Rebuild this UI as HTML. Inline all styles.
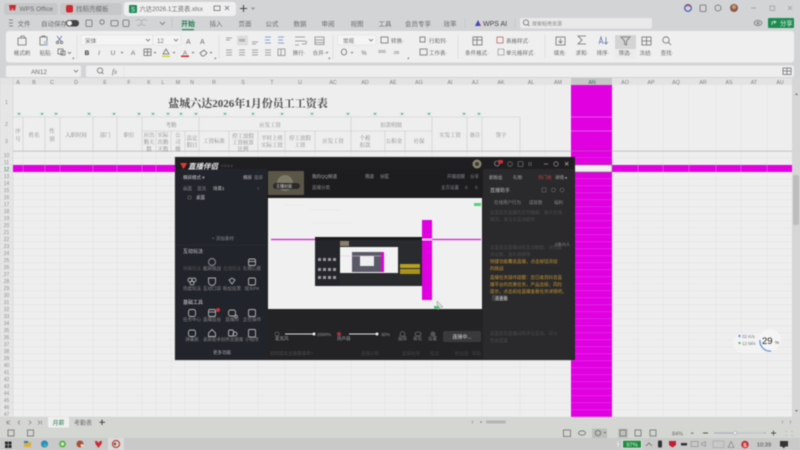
<!DOCTYPE html>
<html lang="zh"><head><meta charset="utf-8"><title>WPS</title>
<style>
html,body{margin:0;padding:0;background:#d3d4d6;width:800px;height:450px;overflow:hidden}
svg{display:block;filter:blur(.55px);font-size:6.5px;fill:#6c6c6c}
text{font-family:"Liberation Sans","Noto Sans CJK SC",sans-serif}
.m{text-anchor:middle}
.se text,text.se{font-family:"Liberation Serif","Noto Serif CJK SC",serif}
.ic{fill:none;stroke:#6e6e6e;stroke-width:.8}
.dk{fill:none;stroke:#b4b4b4;stroke-width:.9}
.dt{fill:#88888c;font-size:4.5px}
</style></head><body>
<svg width="800" height="450" viewBox="0 0 800 450" xmlns="http://www.w3.org/2000/svg">
<defs>
<pattern id="rows" x="0" y="151" width="10" height="7" patternUnits="userSpaceOnUse"><rect width="10" height="7" fill="#eeeeee"/><rect y="6.5" width="10" height=".5" fill="#e0e1e0"/></pattern>
<pattern id="mrows" x="0" y="151" width="10" height="7" patternUnits="userSpaceOnUse"><rect width="10" height="7" fill="#e000e0"/><rect y="6.4" width="10" height=".6" fill="#e838e8"/></pattern>
<pattern id="lab" x="0" y="151" width="13" height="7" patternUnits="userSpaceOnUse"><rect width="13" height="7" fill="#e6e6e6"/><rect y="6.6" width="13" height=".4" fill="#d8d8d8"/></pattern>
<g id="fm"><rect x="-2.5" y="-2" width="5" height="4" fill="#dcebe4"/><path d="M-1.3-.8h2.6L0 .9z" fill="#2c8a66"/></g>
</defs>
<rect width="800" height="450" fill="#d3d4d6"/>

<!-- top tabs -->
<rect x="4" y="3" width="54" height="12" rx="3" fill="#c6c7c9"/>
<rect x="60" y="3" width="62" height="12" rx="3" fill="#c6c7c9"/>
<rect x="124" y="2" width="112" height="14" rx="3" fill="#efefef"/>
<path d="M9 5h7l-1 5.500h-1.500L12.500 7.500 11.500 10.500H10z" fill="#c8282c"/>
<text x="19.500" y="11">WPS Office</text>
<rect x="66" y="5" width="7" height="7.500" rx="2" fill="#cf2a30"/>
<text x="76" y="11">找稻壳模板</text>
<rect x="129" y="5" width="8" height="8" rx="1" fill="#1f8a57"/><text x="131" y="11.500" style="fill:#fff;font-size:6px">S</text>
<text x="139.500" y="11" style="font-size:6.300px">六达2026.1工资表.xlsx</text>
<rect x="214" y="6" width="6" height="4.500" class="ic"/><path d="M225 6l4 4m0-4l-4 4" class="ic"/>
<path d="M243.500 5v7M240 8.500h7" stroke="#444" stroke-width="1" fill="none"/><path d="M251.500 7.500l1.500 1.500 1.500-1.500" class="ic"/>
<!-- window controls -->
<circle cx="688" cy="8" r="3.300" fill="none" stroke="#4060c0" stroke-width="1.300"/><path d="M685.500 6.500a3.300 3.300 0 0 1 5 0" stroke="#d04040" stroke-width="1.300" fill="none"/>
<rect x="700" y="5" width="6" height="6.500" rx="1" class="ic"/><circle cx="718" cy="8" r="3" class="ic"/><circle cx="734" cy="8" r="4" fill="#8a5a45"/><circle cx="734" cy="7" r="2" fill="#c99a80"/>
<path d="M751 8h5" stroke="#999" stroke-width=".8"/><rect x="770" y="6" width="4.500" height="4.500" fill="none" stroke="#999" stroke-width=".7"/><path d="M788 6l4 4m0-4l-4 4" stroke="#999" stroke-width=".7"/>

<!-- menu row -->
<path d="M9 20h4M9 23h4M9 26h4" class="ic"/>
<text x="17.500" y="26">文件</text><text x="41" y="26">自动保存</text>
<rect x="66" y="20" width="13" height="6.500" rx="3.200" fill="#444"/><circle cx="69.500" cy="23.200" r="2.500" fill="#eee"/>
<rect x="86" y="20" width="6" height="6.500" rx="1" class="ic"/><circle cx="102" cy="22" r="2.200" class="ic"/><rect x="111" y="20.500" width="7" height="5.500" rx="1" class="ic"/><rect x="123" y="20" width="6" height="6.500" rx="1.500" class="ic"/>
<path d="M136 21a3 3 0 1 1 1 4M147 21a3 3 0 1 0-1 4" stroke="#aaa" stroke-width=".7" fill="none"/><path d="M160 22l2.500 2.500L165 22" class="ic"/>
<path d="M172 18v10" stroke="#bbb" stroke-width=".6"/>
<text class="m" x="188" y="26" style="fill:#1c7a4a;font-size:7px;font-weight:bold">开始</text>
<rect x="182" y="29" width="12" height="1.300" fill="#2b8a5a"/>
<text class="m" x="216" y="26">插入</text><text class="m" x="245" y="26">页面</text><text class="m" x="272" y="26">公式</text><text class="m" x="300" y="26">数据</text><text class="m" x="328" y="26">审阅</text><text class="m" x="357" y="26">视图</text><text class="m" x="385" y="26">工具</text><text class="m" x="418" y="26">会员专享</text><text class="m" x="450" y="26">效率</text>
<path d="M465 18v10" stroke="#c3c3c3" stroke-width=".6"/>
<path d="M475 26l3-6 3 6z" fill="#2c50c8"/><path d="M478 20l3 6h-1.500z" fill="#d0304a"/>
<text x="483" y="26" style="font-size:7px;fill:#444">WPS AI</text>
<path d="M515 18v10" stroke="#c3c3c3" stroke-width=".6"/>
<rect x="520" y="18" width="132" height="10.500" rx="2" fill="#e9e9e9"/><circle cx="526" cy="22.500" r="2.600" class="ic"/><path d="M528 24.500l1.500 1.500" class="ic"/>
<text x="532" y="25.500" style="font-size:5px;fill:#888">搜索稻壳资源</text>
<ellipse cx="758" cy="23" rx="3.800" ry="2.600" class="ic"/><circle cx="758" cy="23" r="1" class="ic"/>
<rect x="768" y="18" width="26" height="10" rx="1" fill="#1c8c50"/><text x="780" y="25.500" style="fill:#e8f6ee;font-size:6.300px">分享</text><path d="M772 25v-3h3m-1-1.500l2 1.500-2 1.500" stroke="#e8f6ee" stroke-width=".7" fill="none"/>

<!-- ribbon -->
<rect x="6" y="31" width="788" height="31.500" rx="3" fill="#efefef"/>
<g fill="none" stroke="#d8d8d8" stroke-width=".6"><path d="M77 35v24M219 35v24M333 35v24M458 35v24M545 35v24"/></g>
<!-- clipboard -->
<path d="M18 38h8v7h-8zM21 38v-2h3l1 2" class="ic"/><path d="M40 37h7v8h-7zM42 37v-1h3v1" class="ic"/><rect x="44" y="41" width="4" height="4" fill="#b8c8d8"/>
<path d="M57 36l4 5m1-5l-4 5" stroke="#6b78a8" stroke-width=".8" fill="none"/><circle cx="57.500" cy="42.500" r="1.200" class="ic"/><circle cx="61.500" cy="42.500" r="1.200" class="ic"/>
<rect x="58" y="49" width="5" height="5" class="ic"/><rect x="61" y="51" width="4" height="4" class="ic"/>
<g style="font-size:5.500px"><text class="m" x="22" y="55">格式刷</text><text class="m" x="46" y="55">粘贴·</text></g>
<path d="M68 52l1.500 1.500L71 52" class="ic"/>
<!-- font -->
<rect x="81" y="35" width="72" height="10" rx="1.500" fill="#f4f4f4" stroke="#dcdcdc" stroke-width=".5"/>
<rect x="153" y="35" width="28" height="10" rx="1.500" fill="#f4f4f4" stroke="#dcdcdc" stroke-width=".5"/>
<text x="85" y="43" style="font-size:5.800px">宋体</text><path d="M146 39l2 2 2-2M174 39l2 2 2-2" class="ic"/><text x="157" y="43" style="font-size:6px">12</text>
<text x="186" y="44" style="font-size:7px">A</text><text x="200" y="44" style="font-size:7px">A</text>
<text class="m" x="87" y="55" style="font-weight:bold;fill:#333">B</text><text class="m" x="99" y="55" style="font-style:italic">I</text><text class="m" x="113" y="55">U</text><path d="M121 52l1 1 1-1" class="ic"/><text class="m" x="133" y="55">A</text>
<rect x="144" y="49" width="7" height="6.500" class="ic"/><path d="M144 52h7M147.500 49v6.500" class="ic"/><path d="M154 52l1 1 1-1" class="ic"/>
<path d="M163 54l3-5 3 5z" class="ic"/><rect x="162" y="55.500" width="8" height="1.500" fill="#c8d83c"/><path d="M173 52l1 1 1-1" class="ic"/>
<text class="m" x="185" y="55">A</text><rect x="181" y="55.500" width="8" height="1.500" fill="#c8242c"/><path d="M192 52l1 1 1-1" class="ic"/>
<path d="M200 53l4-3 3 3-3 3h-2z" class="ic"/><path d="M210 52l1 1 1-1" class="ic"/>
<path d="M72 59l2-2v2zM214 59l2-2v2zM328 59l2-2v2zM407 59l2-2v2z" fill="#777"/>
<!-- align -->
<rect x="237" y="35.500" width="11" height="10" rx="1" fill="#dcdcdc"/>
<g stroke="#8c8c8c" stroke-width=".8" fill="none">
<path d="M226 38h6M226 40h4M239 39.500h6M239 41h6M252 42h6M252 44h4"/>
<path d="M265 37h6M265 40h5M265 43h6M278 37h6M278 40h5M278 43h6" stroke="#6a8ac8"/>
<path d="M226 50h6M226 52.500h6M226 55h6M239 50h6M239 52.500h6M239 55h6M252 50h6M252 52.500h6M252 55h6M265 50h6M265 52.500h6M265 55h6"/>
<rect x="278" y="49" width="7" height="6.500"/><path d="M281 49v6.500"/>
<path d="M295 37h10M295 41h10a1.500 1.500 0 0 1 0 3h-3M295 45h4"/>
<rect x="315" y="37" width="9" height="7.500"/><path d="M315 40h9M315 42.500h9"/>
</g>
<g style="font-size:5.500px"><text class="m" x="299" y="55">换行·</text><text class="m" x="319" y="55">合并·</text></g>
<path d="M326 52l1 1 1-1" class="ic"/>
<!-- number -->
<rect x="338" y="35" width="38" height="10" rx="1.500" fill="#f4f4f4" stroke="#dcdcdc" stroke-width=".5"/>
<text x="343" y="42.800" style="font-size:5.500px">常规</text><path d="M369 39l2 2 2-2" class="ic"/>
<ellipse cx="344" cy="52" rx="2.600" ry="3" class="ic"/><path d="M351 52l1 1 1-1" class="ic"/>
<text class="m" x="364" y="55" style="font-size:6px">%</text><text class="m" x="382" y="53" style="font-size:4.500px">000</text><text class="m" x="396" y="54" style="font-size:4.500px">.00</text>
<rect x="381" y="37" width="7" height="6" class="ic"/><text x="391" y="43" style="font-size:5.500px">转换·</text>
<rect x="420" y="37" width="5" height="5" class="ic"/><text x="429" y="43" style="font-size:5.500px">行和列·</text>
<rect x="420" y="49" width="7" height="6" class="ic"/><text x="429" y="55" style="font-size:5.500px">工作表·</text>
<!-- styles -->
<rect x="473" y="37" width="9" height="8" class="ic"/><path d="M473 40h9M477 37v8" class="ic"/>
<rect x="497" y="37" width="6" height="6" class="ic" style="stroke:#b86a6a"/><text x="506" y="43" style="font-size:5.500px">表格样式·</text>
<rect x="498" y="49" width="6" height="6" class="ic" stroke-dasharray="1 .6"/><text x="506" y="55" style="font-size:5.500px">单元格样式·</text>
<text class="m" x="477" y="55" style="font-size:5.500px">条件格式·</text>
<!-- right tools -->
<rect x="615" y="35" width="21" height="14" rx="1" fill="#d4d4d4"/><rect x="615" y="49" width="21" height="10" rx="1" fill="#ebebeb"/>
<rect x="556" y="37" width="9" height="8" class="ic"/><path d="M560.500 38.500v4M558.500 41l2 2 2-2" class="ic"/>
<path d="M586 36h-8l4 4-4 4h8" class="ic"/>
<path d="M599 44l2-7 2 7M600 42h2M606 37v7M604 42l2 2 2-2" class="ic" style="stroke:#6a7ab0"/>
<path d="M621 37h9l-3.500 4v4l-2-1v-3z" class="ic"/>
<rect x="642" y="37" width="9" height="8" class="ic"/><path d="M642 41h9M646.500 37v8" class="ic"/>
<circle cx="666" cy="40" r="3.200" class="ic"/><path d="M668.500 42.500l2.500 2.500" class="ic"/>
<g style="font-size:5.500px"><text class="m" x="560" y="55">填充·</text><text class="m" x="582" y="55">求和·</text><text class="m" x="603" y="55">排序·</text><text class="m" x="625" y="55">筛选·</text><text class="m" x="646" y="55">冻结·</text><text class="m" x="667" y="55">查找·</text></g>

<!-- formula bar -->
<rect x="6" y="65.500" width="75" height="11.500" rx="2" fill="#eeeeee"/>
<rect x="86" y="65.500" width="708" height="11.500" rx="2" fill="#eeeeee"/>
<text class="m" x="39" y="74" style="font-size:6.300px">AN12</text><path d="M74 70l2 2 2-2" class="ic"/>
<circle cx="100" cy="70.500" r="2.600" class="ic"/><path d="M102 72.500l1.500 1.500" class="ic"/>
<text x="112" y="74" class="se" style="font-style:italic;font-size:7px">fx</text><path d="M124 66v11" stroke="#ddd" stroke-width=".5"/>
<rect x="783" y="68" width="8" height="6.500" class="ic"/><path d="M783 71h8M787 68v6.500" class="ic"/>

<!-- sheet -->
<rect x="0" y="78" width="800" height="7.500" fill="#e3e3e3"/>
<rect x="571" y="78" width="41" height="7.500" fill="#c6c8c6"/>
<rect x="13" y="85" width="779" height="66" fill="#eeeeee"/>
<rect x="13" y="151" width="779" height="266" fill="url(#rows)"/>
<rect x="0" y="85" width="13" height="66" fill="#e6e6e6"/>
<rect x="0" y="151" width="13" height="266" fill="url(#lab)"/>
<path d="M13 78v339" stroke="#cfcfcf" stroke-width=".5"/>
<g stroke="#e0e0e0" stroke-width=".5" fill="none"><path d="M23 151v266M45 151v266M60 151v266M93 151v266M117 151v266M142 151v266M156 151v266M171 151v266M185 151v266M199 151v266M229 151v266M258 151v266M285 151v266M315 151v266M351 151v266M385 151v266M405 151v266M432 151v266M467 151v266M482 151v266M520 151v266M545 85v332M638 85v332M663 85v332M689 85v332M716 85v332M741 85v332M767 85v332"/></g>
<g style="font-size:5.300px;fill:#808080">
<text class="m" x="18" y="84">A</text><text class="m" x="34" y="84">B</text><text class="m" x="52" y="84">C</text><text class="m" x="76" y="84">D</text><text class="m" x="105" y="84">E</text><text class="m" x="129" y="84">F</text><text class="m" x="149" y="84">K</text><text class="m" x="163" y="84">L</text><text class="m" x="178" y="84">M</text><text class="m" x="192" y="84">N</text><text class="m" x="214" y="84">R</text><text class="m" x="243" y="84">S</text><text class="m" x="272" y="84">T</text><text class="m" x="300" y="84">U</text><text class="m" x="333" y="84">AC</text><text class="m" x="365" y="84">AD</text><text class="m" x="393" y="84">AE</text><text class="m" x="419" y="84">AG</text><text class="m" x="450" y="84">AI</text><text class="m" x="475" y="84">AJ</text><text class="m" x="501" y="84">AK</text><text class="m" x="531" y="84">AL</text><text class="m" x="558" y="84">AM</text><text class="m" x="592" y="84" style="fill:#2a7a50">AN</text><text class="m" x="625" y="84">AO</text><text class="m" x="651" y="84">AP</text><text class="m" x="676" y="84">AQ</text><text class="m" x="703" y="84">AR</text><text class="m" x="729" y="84">AS</text><text class="m" x="754" y="84">AT</text><text class="m" x="780" y="84">AU</text>
</g>
<!-- header table lines -->
<g stroke="#c8c8c8" stroke-width=".6" fill="none">
<path d="M13 117H520M142 131H199M199 131H351M351 131H432"/>
<path d="M23 117v34M45 117v34M60 117v34M93 117v34M117 117v34M142 117v34M199 117v34M351 117v34M432 117v34M467 117v34M482 117v34M520 117v34"/>
<path d="M156 131v20M171 131v20M185 131v20M229 131v20M258 131v20M285 131v20M315 131v20M385 131v20M405 131v20"/>
</g>
<path d="M13 151.200H792" stroke="#bcbcbc" stroke-width=".9"/>
<text class="m se" x="248" y="107" style="font-size:11px;fill:#4a4a4a;font-weight:bold">盐城六达2026年1月份员工工资表</text>
<g class="se" style="fill:#858585;font-size:5.400px">
<text x="18" y="133" class="m">序</text><text x="18" y="141" class="m">号</text>
<text x="34" y="137" class="m">姓名</text>
<text x="52" y="133" class="m">性</text><text x="52" y="141" class="m">别</text>
<text x="76" y="137" class="m">入职时间</text><text x="105" y="137" class="m">部门</text><text x="129" y="137" class="m">职位</text>
<text x="171" y="127" class="m">考勤</text><text x="270" y="127" class="m">应发工资</text><text x="391" y="127" class="m">扣款明细</text>
<text x="149" y="137" class="m">应出</text><text x="149" y="144" class="m">勤天</text><text x="149" y="151" class="m">数</text>
<text x="163" y="137" class="m">实际</text><text x="163" y="144" class="m">出勤</text><text x="163" y="151" class="m">天数</text>
<text x="178" y="137" class="m">公</text><text x="178" y="144" class="m">司</text><text x="178" y="151" class="m">缴</text>
<text x="192" y="140" class="m">法定</text><text x="192" y="147" class="m">假日</text>
<text x="214" y="143" class="m">工资标准</text>
<text x="243" y="138" class="m">停工放假</text><text x="243" y="144.500" class="m">工资核算</text><text x="243" y="151" class="m">比例</text>
<text x="272" y="140" class="m">平时上班</text><text x="272" y="147" class="m">实际工资</text>
<text x="300" y="140" class="m">停工放假</text><text x="300" y="147" class="m">工资</text>
<text x="333" y="143" class="m">应发工资</text>
<text x="365" y="140" class="m">个税</text><text x="365" y="147" class="m">扣款</text>
<text x="394" y="143" class="m">公积金</text><text x="419" y="143" class="m">社保</text>
<text x="450" y="137" class="m">实发工资</text><text x="475" y="137" class="m">备注</text><text x="501" y="137" class="m">签字</text>
</g>
<use href="#fm" x="19" y="114"/><use href="#fm" x="42" y="114"/><use href="#fm" x="56" y="114"/><use href="#fm" x="89" y="114"/><use href="#fm" x="114" y="114"/><use href="#fm" x="139" y="114"/><use href="#fm" x="153" y="114"/><use href="#fm" x="168" y="114"/><use href="#fm" x="181" y="114"/><use href="#fm" x="196" y="114"/><use href="#fm" x="225" y="114"/><use href="#fm" x="253" y="114"/><use href="#fm" x="282" y="114"/><use href="#fm" x="312" y="114"/><use href="#fm" x="348" y="114"/><use href="#fm" x="375" y="114"/><use href="#fm" x="402" y="114"/><use href="#fm" x="429" y="114"/><use href="#fm" x="464" y="114"/><use href="#fm" x="479" y="114"/>
<!-- row numbers -->
<g style="font-size:5px;fill:#909090">
<text class="m" x="6.500" y="104">1</text><text class="m" x="6.500" y="126">2</text><text class="m" x="6.500" y="143">3</text><text class="m" x="6.500" y="157">10</text><text class="m" x="6.500" y="164">11</text><text class="m" x="6.500" y="171" style="fill:#2a7a50">12</text>
<text class="m" x="6.500" y="178">13</text><text class="m" x="6.500" y="185">14</text><text class="m" x="6.500" y="192">15</text><text class="m" x="6.500" y="199">16</text><text class="m" x="6.500" y="206">17</text><text class="m" x="6.500" y="213">18</text><text class="m" x="6.500" y="220">19</text><text class="m" x="6.500" y="227">20</text><text class="m" x="6.500" y="234">21</text><text class="m" x="6.500" y="241">22</text><text class="m" x="6.500" y="248">23</text><text class="m" x="6.500" y="255">24</text><text class="m" x="6.500" y="262">25</text><text class="m" x="6.500" y="269">26</text><text class="m" x="6.500" y="276">27</text><text class="m" x="6.500" y="283">28</text><text class="m" x="6.500" y="290">29</text><text class="m" x="6.500" y="297">30</text><text class="m" x="6.500" y="304">31</text><text class="m" x="6.500" y="311">32</text><text class="m" x="6.500" y="318">33</text><text class="m" x="6.500" y="325">34</text><text class="m" x="6.500" y="332">35</text><text class="m" x="6.500" y="339">36</text><text class="m" x="6.500" y="346">37</text><text class="m" x="6.500" y="353">38</text><text class="m" x="6.500" y="360">39</text><text class="m" x="6.500" y="367">40</text><text class="m" x="6.500" y="374">41</text><text class="m" x="6.500" y="381">42</text><text class="m" x="6.500" y="388">43</text><text class="m" x="6.500" y="395">44</text><text class="m" x="6.500" y="402">45</text><text class="m" x="6.500" y="409">46</text><text class="m" x="6.500" y="416">47</text>
</g>
<!-- magenta -->
<rect x="571" y="85" width="41" height="332" fill="#e000e0"/>
<rect x="571" y="151" width="41" height="266" fill="url(#mrows)"/>
<path d="M571 117h41M571 131h41" stroke="#ee70ee" stroke-width=".7"/><path d="M571 151h41" stroke="#c050c0" stroke-width=".8"/>
<rect x="13" y="165" width="558" height="7" fill="#e000e0"/><rect x="612" y="165" width="180" height="7" fill="#e000e0"/>
<rect x="571" y="165" width="41" height="7" fill="#f0f0f0" stroke="#777" stroke-width=".7"/>
<g stroke="#ee80ee" stroke-width=".5"><path d="M23 165v7M45 165v7M60 165v7M93 165v7M117 165v7M142 165v7M156 165v7M638 165v7M663 165v7M689 165v7M716 165v7M741 165v7M767 165v7"/></g>
<!-- scrollbar -->
<rect x="792" y="78" width="8" height="339" fill="#d6d6d6"/><rect x="793" y="175" width="6" height="50" rx="2" fill="#bdbdbd"/>
<path d="M795 95l1.500-2 1.500 2zM795 410l1.500 2 1.500-2z" fill="#777"/>

<!-- net widget -->
<rect x="733" y="333" width="38" height="20" rx="10" fill="#f2f2f2"/>
<circle cx="770" cy="340" r="11" fill="#f4f4f4"/>
<path d="M760 340a10 10 0 0 0 11 11" stroke="#5a8ad8" stroke-width="1.200" fill="none"/>
<text x="762" y="344" style="font-size:9.500px;fill:#222">29</text><text x="775" y="344" style="font-size:4.500px;fill:#333">%</text>
<text x="742" y="338" style="font-size:4.500px;fill:#777">32 K/s</text><text x="742" y="345" style="font-size:4.500px;fill:#777">12 M/s</text>
<rect x="738.500" y="335" width="2" height="2" fill="#5a8ad8"/><rect x="738.500" y="342" width="2" height="2" fill="#5ab86a"/>

<!-- dark window -->
<rect x="175" y="157" width="400" height="203" fill="#232326"/>
<rect x="176" y="158" width="91" height="201" fill="#22242b"/>
<rect x="267" y="158" width="216" height="40" fill="#1d1d20"/>
<rect x="267" y="309" width="216" height="50" fill="#232326"/>
<rect x="483" y="158" width="91" height="201" fill="#2a2a2c"/>
<rect x="176" y="158" width="398" height="11" fill="#1f1f22"/>
<path d="M180 163h7l-2 4-2 2-1-3z" fill="#e23a34"/>
<text x="188" y="169" style="font-size:7.500px;fill:#e8e8e8;font-style:italic;font-weight:bold">直播伴侣</text>
<text x="221" y="167" style="font-size:3.800px;fill:#666">9.5.6.4</text>
<g class="dt">
<text x="183" y="179" style="fill:#ccc">横屏模式 ▾</text><text x="243" y="179" style="fill:#bbb">横屏</text><text x="254" y="179">竖屏</text>
<text x="183" y="190">画面</text><text x="197" y="190">混流</text><text x="213" y="190" style="fill:#ccc">场景1</text><text x="257" y="190">+</text>
<rect x="188" y="196" width="3" height="3" fill="none" stroke="#888" stroke-width=".4"/><text x="196" y="199" style="fill:#ccc">桌面</text>
<text x="212" y="240">+ 添加素材</text>
<text x="183" y="253" style="fill:#ccc;font-size:5px">互动玩法</text>
<text x="183" y="304" style="fill:#ddd;font-size:5px">基础工具</text>
<text class="m" x="222" y="354" style="fill:#aaa">更多功能</text>
</g>
<rect x="177" y="245" width="88" height=".5" fill="#303238"/>
<!-- tool icons -->
<g class="dk">
<circle cx="212" cy="262" r="3.500" stroke="#999"/><rect x="248.500" y="259" width="7" height="6.500" rx="1.500"/><path d="M248.500 261.500h7"/>
<circle cx="190" cy="280" r="2"/><circle cx="194" cy="280" r="2"/><circle cx="192" cy="283" r="2"/>
<path d="M208.500 278h7v4a3.500 3.500 0 0 1-7 0z"/><path d="M229 280l3-2 3 2-3 4z"/><rect x="248.500" y="278" width="7" height="7" rx="1.500"/>
<rect x="188.500" y="309.500" width="7" height="7" rx="2"/><rect x="208.500" y="309.500" width="7" height="7" rx="1.500"/><path d="M209 312h6"/>
<rect x="228.500" y="310" width="7" height="6" rx="2"/><circle cx="236" cy="316.500" r="1.300"/><rect x="248.500" y="309.500" width="7" height="7" rx="1.500"/>
<rect x="188.500" y="330" width="7" height="6.500" rx="2"/><path d="M212 329.500l3.500 3.500v3.500h-7V333z"/><rect x="228.500" y="330" width="5" height="6" rx="1.500"/><circle cx="235" cy="334" r="2"/><rect x="248.500" y="329.500" width="7" height="7.500" rx="1"/>
</g>
<circle cx="218" cy="310" r="2" fill="#d0303a"/>
<g class="dt">
<text class="m" x="192" y="270" style="fill:#555">弹幕玩法</text><text class="m" x="212" y="270">截屏挑战</text><text class="m" x="232" y="270" style="fill:#555">连线玩法</text><text class="m" x="252" y="270">礼物心愿</text>
<text class="m" x="192" y="290">热度玩法</text><text class="m" x="212" y="290">互动口袋</text><text class="m" x="232" y="290">粉丝投票</text><text class="m" x="252" y="290">观众PK</text>
<text class="m" x="192" y="321">任务中心</text><text class="m" x="212" y="321">直播后台</text><text class="m" x="232" y="321">直播间</text><text class="m" x="252" y="321">正在操作</text>
<text class="m" x="192" y="341">弹幕姬</text><text class="m" x="212" y="341">录屏助手</text><text class="m" x="232" y="341">创作灵感库</text><text class="m" x="252" y="341">小程序</text>
</g>
<!-- header center -->
<rect x="268" y="171" width="36" height="24" rx="1" fill="#5a5648"/><circle cx="285" cy="183" r="8" fill="#7e7a68"/>
<rect x="273" y="183" width="27" height="6" rx="3" fill="#2a2a2a"/>
<text x="276" y="187.500" style="font-size:4px;fill:#ddd">主播封面</text>
<g class="dt"><text x="312" y="178" style="fill:#aaa">我的QQ频道</text><text x="365" y="178" style="fill:#aaa">用途</text><text x="312" y="189">直播分类</text><text x="380" y="178" style="fill:#aaa">分区</text>
<text x="447" y="178">开播提醒</text><text x="470" y="178">分享</text><text x="441" y="189">主页设置</text><text x="465" y="189">0</text><text x="475" y="189">0</text></g>
<circle cx="477" cy="164" r="4.500" fill="#8a8468"/><circle cx="477" cy="164" r="2" fill="#3a3a3a"/>
<circle cx="497" cy="163.500" r="2.500" fill="none" stroke="#aaa" stroke-width=".6"/><rect x="498" y="160" width="5" height="3.500" rx="1.500" fill="#d92c3a"/>
<circle cx="510" cy="164" r="2.300" fill="none" stroke="#888" stroke-width=".6"/><rect x="518" y="161.500" width="5" height="5" rx="1" fill="none" stroke="#888" stroke-width=".6"/><path d="M529 162v4M531 162v4" stroke="#888" stroke-width=".6"/>
<path d="M544 164h4" stroke="#bbb" stroke-width=".6"/><circle cx="556" cy="164" r="2.200" fill="none" stroke="#aaa" stroke-width=".6"/><path d="M565 162l3.500 3.500m0-3.500L565 165.500" stroke="#bbb" stroke-width=".6"/>
<!-- right panel -->
<g class="dt">
<text x="489" y="179" style="fill:#bbb">新粉丝</text><text x="513" y="179" style="fill:#aaa">礼物</text><text x="538" y="179" style="fill:#c84040">热门榜</text><text x="555" y="179" style="fill:#aaa">详情 ▸</text>
<text x="490" y="192" style="fill:#bbb;font-size:5px">直播助手</text>
<text x="494" y="204">在线用户行为</text><text x="529" y="204">成就数</text><text x="554" y="204">福利</text>
<text x="490" y="214" style="fill:#4c4c4e">这里是您直播的实时数据，观众在线</text><text x="490" y="221" style="fill:#4c4c4e">情况，关注与互动趋势</text>
<text x="490" y="249" style="fill:#4c4c4e">这里是您直播间的互动数据，点赞数</text><text x="490" y="256" style="fill:#4c4c4e">评论数，送礼明细等</text><text x="555" y="246">0条/0人</text>
<text x="490" y="263" style="fill:#c8962c">快捷功能覆盖直播，点击按钮添加</text><text x="490" y="270" style="fill:#c8962c">的挑战</text>
<text x="490" y="279" style="fill:#c8962c">直播任务操作提醒：您已收到抖音直</text><text x="490" y="286" style="fill:#c8962c">播平台的优惠任务，产品连接；风险</text><text x="490" y="293" style="fill:#c8962c">提示，点击前往直播查看任务详情吧。</text>
<text x="490" y="335" style="fill:#4c4c4e">这里是您直播间的评论互动，可以</text><text x="490" y="342" style="fill:#4c4c4e">在此回复</text>
</g>
<rect x="492" y="295" width="14" height="6" rx="1" fill="#444"/><text x="495" y="299.800" style="font-size:4.300px;fill:#ddd">去查看</text>
<g fill="none" stroke="#777" stroke-width=".5"><rect x="542" y="188" width="4" height="4"/><circle cx="553.500" cy="190" r="2"/><circle cx="562" cy="190" r="2"/></g>
<!-- preview -->
<rect x="268" y="198" width="214" height="111" fill="#f0f0f0"/>
<path d="M271 239.500H481" stroke="#d818d8" stroke-width="1.300"/>
<rect x="422" y="220" width="10" height="80" fill="#e000e0"/>
<path d="M422 239.500h10" stroke="#fff" stroke-width="1.800"/>
<rect x="474" y="203" width="7" height="3" fill="#5ad07a"/>
<g stroke="#e4e4e4" stroke-width=".5"><path d="M285 205h20M310 210h30M312 223h40"/></g>
<rect x="315" y="237" width="107" height="49" fill="#2a2b2e"/>
<rect x="315" y="237" width="107" height="3" fill="#1c1c1e"/>
<rect x="316" y="240" width="24" height="46" fill="#24262c"/>
<rect x="340" y="247" width="58" height="26" fill="#f2f2f2"/>
<rect x="352" y="252" width="29" height="20" fill="#5a5a66"/><rect x="360" y="256" width="14" height="10" fill="#eee"/>
<rect x="381" y="252" width="3" height="20" fill="#e000e0"/><path d="M340 256h41" stroke="#eac0ea" stroke-width=".5"/>
<rect x="340" y="241" width="9" height="5" fill="#8a806a"/>
<rect x="400" y="264" width="20" height="4" fill="#b8a020"/><rect x="400" y="269" width="20" height="5" fill="#a8941c"/>
<g fill="#9a9a9e"><rect x="318" y="258" width="3" height="3"/><rect x="323" y="258" width="3" height="3"/><rect x="328" y="258" width="3" height="3"/><rect x="333" y="258" width="3" height="3"/><rect x="318" y="268" width="3" height="3"/><rect x="323" y="268" width="3" height="3"/><rect x="328" y="268" width="3" height="3"/><rect x="333" y="268" width="3" height="3"/><rect x="318" y="276" width="3" height="3"/><rect x="323" y="276" width="3" height="3"/><rect x="328" y="276" width="3" height="3"/><rect x="333" y="276" width="3" height="3"/></g>
<path d="M437 301l1 9 2-2.500 3-.5z" fill="#ddd" stroke="#888" stroke-width=".5"/>
<rect x="434" y="306" width="5" height="2.500" fill="#48c070"/>
<!-- bottom controls -->
<g class="dt">
<text x="275" y="340" style="fill:#999">麦克风</text><text x="337" y="340" style="fill:#999">扬声器</text>
<text x="317" y="336" style="fill:#999">2000%</text><text x="381" y="336" style="fill:#999">30%</text>
<text x="398" y="340">画质</text><text x="413" y="340">美化</text><text x="428" y="340">设置</text>
<text x="270" y="355" style="fill:#4a4a4c">如何提高主播暴播率?</text>
<text x="361" y="355" style="fill:#444">直播诊断</text><text x="402" y="355" style="fill:#444">直播权限</text><text x="430" y="355" style="fill:#444">投流</text><text x="455" y="355" style="fill:#444">粉丝团</text><text x="472" y="355" style="fill:#444">帮助</text>
</g>
<path d="M285 334h30M349 334h28" stroke="#e0e0e0" stroke-width="1"/><circle cx="314" cy="334" r="1.500" fill="#eee"/><circle cx="377" cy="334" r="1.500" fill="#eee"/>
<circle cx="277" cy="334" r="2" fill="none" stroke="#777" stroke-width=".6"/><circle cx="339" cy="334" r="2" fill="#a83040"/>
<circle cx="402.500" cy="334" r="2.300" fill="none" stroke="#888" stroke-width=".6"/><ellipse cx="418" cy="334" rx="3" ry="2" fill="none" stroke="#888" stroke-width=".6"/><circle cx="433" cy="334" r="2.500" fill="#555"/>
<rect x="443" y="331" width="38" height="11" rx="2" fill="#3a3a3c"/><text class="m" x="462" y="338.500" style="font-size:5px;fill:#ddd">连接中...</text>
<rect x="175.200" y="157.200" width="399.600" height="202.600" fill="none" stroke="#2e2e30" stroke-width=".6"/>

<!-- sheet tabs -->
<rect x="0" y="417" width="800" height="11" fill="#d5d6d4"/>
<rect x="48" y="417" width="21" height="10.500" rx="1" fill="#efefef"/>
<g fill="none" stroke="#777" stroke-width=".6"><path d="M10 420.500l-2.500 2 2.500 2M7 420.500v4M20 420.500l-2 2 2 2M29 420.500l2 2-2 2M38 420.500l2 2-2 2M41.500 420.500v4"/></g>
<text class="m" x="58.500" y="425" style="font-size:6px;fill:#2a7a50">月薪</text>
<text class="m" x="83" y="425" style="font-size:6px">考勤表</text>
<path d="M102 419.500v5.500M99.500 422.300h5.500" stroke="#444" stroke-width="1"/>
<rect x="486" y="420.500" width="20" height="3" rx="1.500" fill="#b4b4b4"/>
<circle cx="481" cy="422" r=".8" fill="#777"/><path d="M472.500 420.500v3M782.500 420.500v3M790.500 420.500v3" stroke="#777" stroke-width=".5"/>

<!-- status bar -->
<rect x="0" y="428" width="800" height="10" fill="#d4d6d2"/>
<rect x="8" y="430" width="6" height="6" class="ic"/><rect x="27.500" y="430" width="6" height="6" class="ic"/>
<g class="ic"><rect x="563.500" y="430" width="7" height="6.500"/><ellipse cx="582" cy="433" rx="3.500" ry="2.200"/></g>
<rect x="592" y="428.500" width="15" height="9.500" fill="#bcbeba"/><rect x="618" y="428.500" width="10" height="9.500" fill="#c0c2be"/>
<circle cx="598" cy="433" r="2.700" class="ic"/><path d="M604 432l1 1 1-1" class="ic"/>
<rect x="620" y="430" width="6" height="6" class="ic"/><rect x="635" y="430" width="6" height="6" class="ic"/><rect x="650" y="430" width="6" height="6" class="ic"/>
<text x="672" y="435.500" style="font-size:5.500px">84%</text><path d="M691 432.500l1.200 1.200 1.200-1.200" class="ic"/>
<path d="M703 433h5" stroke="#555" stroke-width="1"/>
<path d="M714 433h52" stroke="#a8b2c4" stroke-width="1.200"/><path d="M735 433h29" stroke="#c4c8c8" stroke-width="1.200"/><circle cx="735" cy="433" r="1.800" fill="#eee" stroke="#888" stroke-width=".4"/>
<path d="M771 433h5M773.500 430.500v5" stroke="#555" stroke-width=".9"/>
<path d="M786 431v1M792 431v1M786 435v1M792 435v1" stroke="#888" stroke-width=".6"/>

<!-- taskbar -->
<rect x="0" y="438" width="800" height="12" fill="#c8c9c8"/>
<rect x="108" y="438" width="16" height="12" fill="#d9dad9"/>
<g fill="#2a2a2a"><rect x="5" y="441.500" width="3" height="3"/><rect x="8.500" y="441.500" width="3" height="3"/><rect x="5" y="445" width="3" height="3"/><rect x="8.500" y="445" width="3" height="3"/></g>
<rect x="24" y="442" width="7" height="5" fill="#d8b040"/><rect x="24" y="441" width="4" height="2" fill="#3a7aa8"/>
<circle cx="44.500" cy="444" r="3.500" fill="#2a88c8"/><circle cx="45" cy="445" r="1.500" fill="#40c080"/>
<circle cx="62.500" cy="444" r="3.500" fill="#5cb84c"/><circle cx="62.500" cy="444" r="1.500" fill="#e8f0e0"/>
<circle cx="80" cy="444" r="3.500" fill="#a85038"/><circle cx="82" cy="445.500" r="1.500" fill="#e8d8c8"/>
<path d="M95 441l2 0 1.500 2 1.500-2 2 0-.5 3-3 4-3-4z" fill="#d02830"/>
<circle cx="116" cy="444" r="3.500" fill="none" stroke="#c84030" stroke-width="1.300"/><circle cx="115" cy="444" r="1.200" fill="#444"/>
<rect x="622" y="440" width="20" height="8.500" fill="#e8e8e8"/><rect x="623" y="440.700" width="18" height="7" fill="#1f8a40"/>
<text class="m" x="632" y="446.500" style="font-size:5.800px;fill:#d8f4dc">97%</text>
<path d="M618.500 441l-1.500 3h2l-1 3" stroke="#eee" stroke-width=".7" fill="none"/>
<path d="M646 446l3-3 3 3" class="ic"/>
<rect x="658" y="440.500" width="4" height="7" rx="1" fill="#333"/>
<path d="M669 441h7v4l-3.500 2.500L669 445z" fill="#c02030"/>
<rect x="681" y="443" width="6" height="2.500" fill="#333"/>
<rect x="691" y="441.500" width="7" height="5" fill="none" stroke="#888" stroke-width=".6"/><path d="M703 443l2.500-1.500v5l-2.500-1.500h-1.500v-2z" fill="none" stroke="#888" stroke-width=".6"/>
<rect x="713" y="441" width="11" height="6.500" fill="none" stroke="#999" stroke-width=".5"/>
<path d="M728 447.500l3-6 3 6z" fill="none" stroke="#777" stroke-width=".6"/>
<circle cx="745" cy="444.500" r="3.700" fill="#c8282c"/><text class="m" x="745" y="446.800" style="font-size:5.500px;fill:#fff;font-weight:bold">S</text>
<text class="m" x="764" y="446.500" style="font-size:5.800px;fill:#444">10:39</text>
<rect x="780" y="441" width="8" height="5.500" fill="#333"/><path d="M782 446.500l2 2 1-2" fill="#333"/>
</svg>
</body></html>
